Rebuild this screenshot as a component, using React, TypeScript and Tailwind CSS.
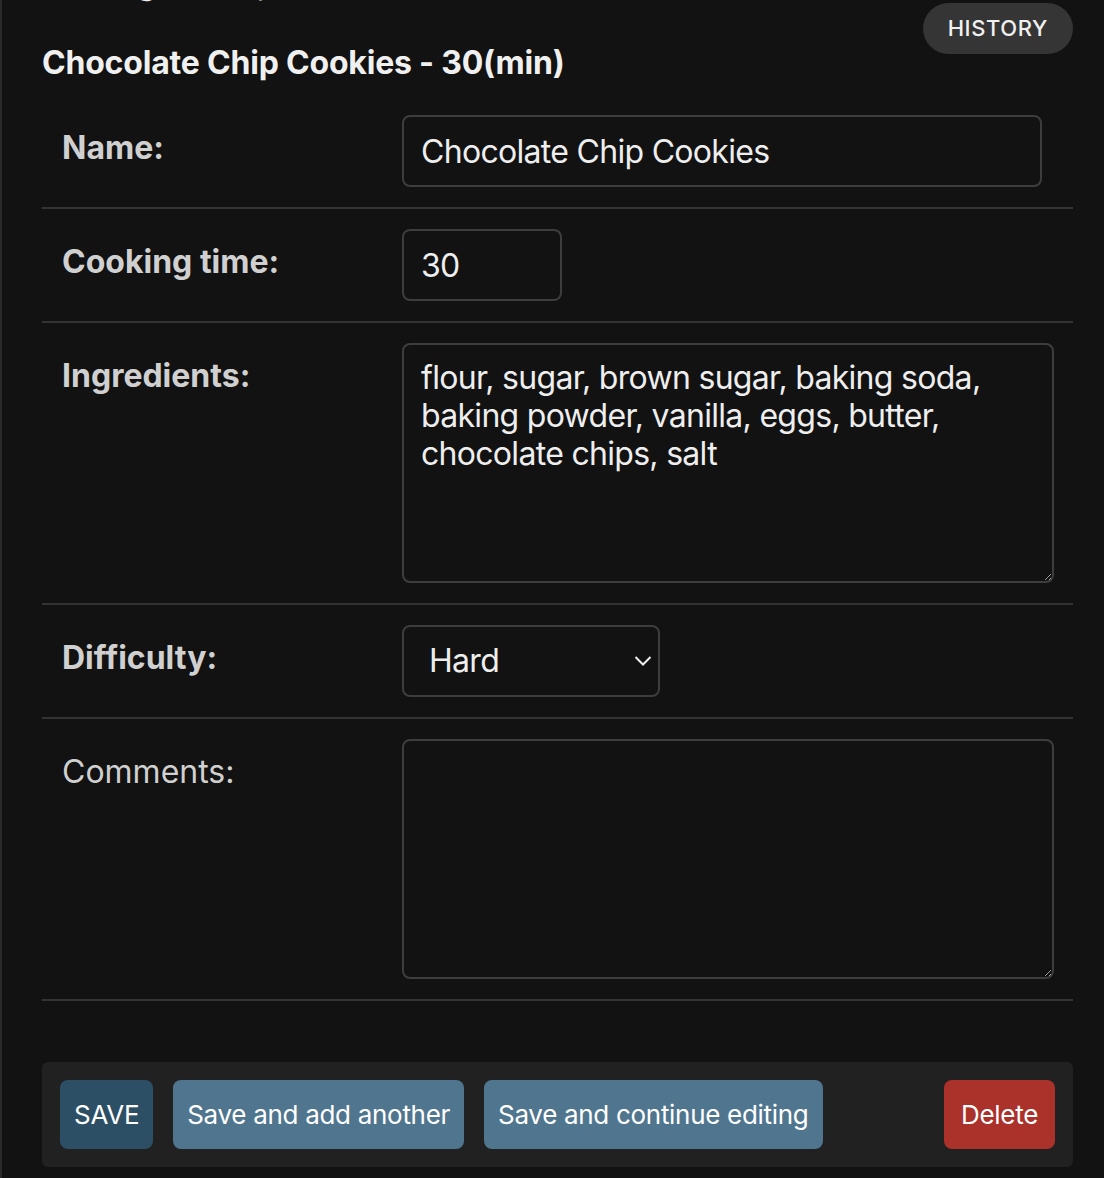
import React, { useState } from 'react';

type RowProps = {
    label: string;
    required?: boolean;
    children: React.ReactNode;
};

const Row: React.FC<RowProps> = ({ label, required = true, children }) => (
    <div className="flex border-b-2 border-[#333333] py-5">
        <label
            className={`w-[360px] shrink-0 pl-5 pt-[13px] text-[32px] leading-[40px] text-[#d0d0d0] ${required ? 'font-bold' : 'font-normal'}`}
        >
            {label}
        </label>
        <div className="flex-1">{children}</div>
    </div>
);

const fieldClass =
    'rounded-lg border-2 border-[#3d3d3d] bg-[#121212] text-[32px] tracking-[-0.7px] text-[#eeeeee] outline-none';

const App: React.FC = () => {
    const [name, setName] = useState('Chocolate Chip Cookies');
    const [time, setTime] = useState('30');
    const [ingredients, setIngredients] = useState(
        'flour, sugar, brown sugar, baking soda, baking powder, vanilla, eggs, butter, chocolate chips, salt'
    );
    const [difficulty, setDifficulty] = useState('Hard');
    const [comments, setComments] = useState('');

    return (
        <div className="flex min-h-screen flex-col border-l-2 border-[#2a2a2a] bg-[#121212] pl-10 pr-[31px] font-['Inter','Noto_Sans',sans-serif] text-[#eeeeee]">
            {/* page title, scrolled mostly out of view */}
            <h1 className="-mt-[43px] h-[44px] text-[38px] font-light leading-[44px] text-[#eeeeee]">
                Change recipe
            </h1>

            <div className="flex items-start justify-between">
                <h2 className="mt-[42px] mb-[12px] text-[32px] font-bold leading-[40px] tracking-[-0.2px] text-[#f0f0f0]">
                    Chocolate Chip Cookies - 30(min)
                </h2>
                <button className="mt-[2px] h-[51px] rounded-full bg-[#353535] px-[25px] text-[22px] font-medium tracking-[0.6px] text-[#f0f0f0]">
                    HISTORY
                </button>
            </div>

            <Row label="Name:">
                <input
                    value={name}
                    onChange={(e) => setName(e.target.value)}
                    className={`${fieldClass} h-[72px] w-[640px] px-[17px]`}
                />
            </Row>

            <Row label="Cooking time:">
                <input
                    value={time}
                    onChange={(e) => setTime(e.target.value)}
                    className={`${fieldClass} h-[72px] w-[160px] px-[17px]`}
                />
            </Row>

            <Row label="Ingredients:">
                <textarea
                    value={ingredients}
                    onChange={(e) => setIngredients(e.target.value)}
                    className={`${fieldClass} block h-[240px] w-[652px] px-[17px] pt-[14px] leading-[38px] [color-scheme:dark]`}
                />
            </Row>

            <Row label="Difficulty:">
                <div className="relative w-[258px]">
                    <select
                        value={difficulty}
                        onChange={(e) => setDifficulty(e.target.value)}
                        className={`${fieldClass} h-[72px] w-full appearance-none pl-[25px] pr-10`}
                    >
                        <option>Easy</option>
                        <option>Medium</option>
                        <option>Intermediate</option>
                        <option>Hard</option>
                    </select>
                    <svg
                        className="pointer-events-none absolute right-2 top-1/2 -translate-y-1/2"
                        width="18"
                        height="11"
                        viewBox="0 0 18 11"
                        fill="none"
                    >
                        <path d="M1.5 1.5 L9 9 L16.5 1.5" stroke="#eeeeee" strokeWidth="2" />
                    </svg>
                </div>
            </Row>

            <Row label="Comments:" required={false}>
                <textarea
                    value={comments}
                    onChange={(e) => setComments(e.target.value)}
                    className={`${fieldClass} block h-[240px] w-[652px] px-[17px] pt-[14px] leading-[38px] [color-scheme:dark]`}
                />
            </Row>

            <div className="mt-[61px] flex items-center gap-5 rounded-md bg-[#212121] p-[18px] text-[26px] tracking-[-0.3px] text-white">
                <button className="h-[69px] rounded-lg bg-[#2c4f66] px-[14px]">SAVE</button>
                <button className="h-[69px] rounded-lg bg-[#50768f] px-[14px]">Save and add another</button>
                <button className="h-[69px] rounded-lg bg-[#50768f] px-[14px]">Save and continue editing</button>
                <button className="ml-auto h-[69px] rounded-lg bg-[#ab312b] px-[17px]">Delete</button>
            </div>
        </div>
    );
};

export default App;
